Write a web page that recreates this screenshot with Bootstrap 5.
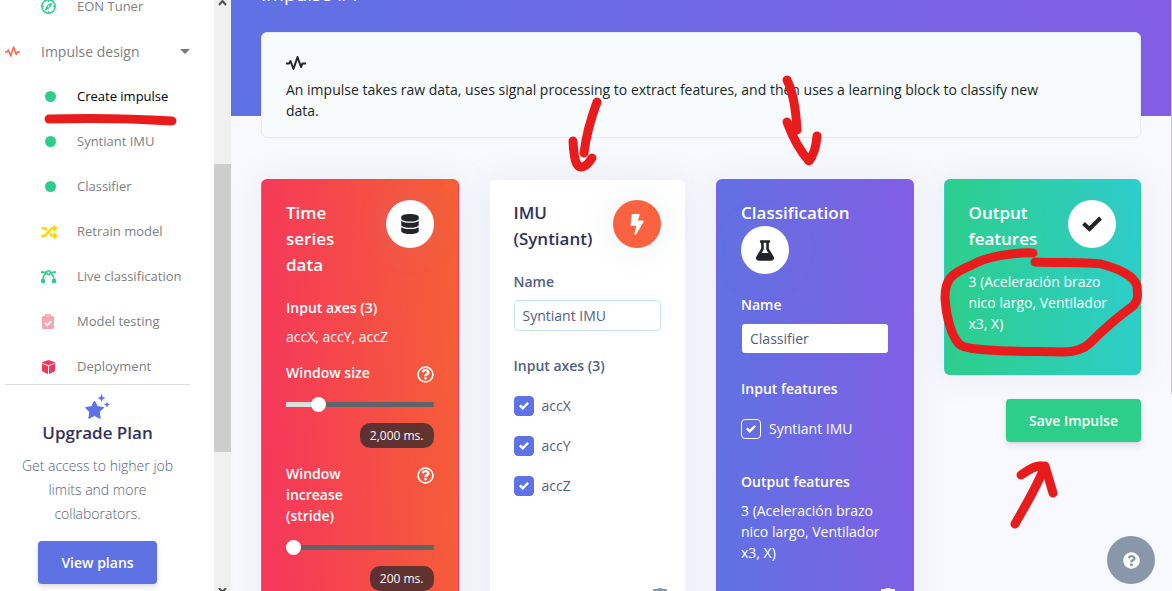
<!DOCTYPE html>
<html lang="en">
<head>
<meta charset="utf-8">
<meta name="viewport" content="width=device-width, initial-scale=1">
<title>Create impulse</title>
<link rel="stylesheet" href="https://cdn.jsdelivr.net/npm/bootstrap@5.3.0/dist/css/bootstrap.min.css">
<style>
  body { font-family: "Open Sans", sans-serif; font-size: 14px; line-height: 21px; color: #525f7f; background: #f8f9fe; }
  h1, h2, h3, p { margin: 0; }
  svg { display: block; flex: none; }

  /* Sidebar */
  .side { width: 214px; flex: none; }
  .side-scrolled { margin-top: -16px; }
  .side-link { height: 45px; display: flex; align-items: center; color: #808080; text-decoration: none; font-size: 13px; }
  .side-link.sub { padding-left: 41px; }
  .side-link.sub .ico { width: 36px; flex: none; }
  .side-link.group { font-size: 14px; padding: 0 24px 0 5px; }
  .side-link.group .ico { width: 36px; flex: none; color: #fb6340; }
  .side-link.current { color: #000; }
  .dot { width: 11px; height: 11px; margin-left: 4px; border-radius: 50%; background: #2dce89; }
  .caret { border: 5px solid transparent; border-top-color: #777; border-bottom: 0; }
  .plan { margin: -5px 24px 0 5px; border-top: 1px solid #dfdfdf; padding-top: 9px; }
  .plan h2 { font-size: 17px; line-height: 26px; font-weight: 600; color: #32325d; }
  .plan p { font-weight: 300; line-height: 24px; padding: 0 12px; margin: 8px 0 15px; }
  .act { font-size: 14px; font-weight: 600; line-height: 21px; padding: 10px 22px; border-radius: 4px; color: #fff; box-shadow: 0 4px 6px rgba(50,50,93,.11), 0 1px 3px rgba(0,0,0,.08); }
  .act-plan { background: #5e72e4; }
  .act-save { background: #2dce89; }
  .bar { width: 17px; flex: none; background: #f0f0f0; }
  .bar-thumb { height: 288px; margin-top: 156px; background: #cdcdcd; }
  .edge { width: 1px; flex: none; }
  .edge div { height: 394px; background: #cbc9d2; }

  /* Main area */
  .hero { display: flow-root; height: 116px; background: linear-gradient(87deg, #5e72e4, #825ee4); padding: 0 30px; }
  .hero h1 { font-size: 19px; line-height: 26px; margin-top: -19px; color: #fff; font-weight: 400; }
  .body-area { margin-top: -84px; padding: 0 30px; }
  .info { background: #f7fbfc; border: 1px solid #e5ecf0; border-radius: 6px; color: #212529; padding: 22px 84px 16px 24px; margin-bottom: 41px; }
  .blocks { --bs-gutter-x: 30px; }
  .block { border: 1px solid transparent; border-radius: 6px; padding: 20px 24px 24px; background: #fff; background-clip: padding-box; box-shadow: 0 0 32px rgba(136,152,170,.15); }
  .block.tinted { color: #fff; background-clip: border-box; }
  .block.red { background-image: linear-gradient(87deg, #f5365c, #f56036); padding-bottom: 37px; }
  .block.indigo { background-image: linear-gradient(87deg, #5e72e4, #825ee4); }
  .block.green { background-image: linear-gradient(87deg, #2dce89, #2dcecc); padding-bottom: 40px; }
  .head { display: flex; flex-wrap: wrap; column-gap: 16px; margin-bottom: 19px; }
  .indigo .head { margin-bottom: 20px; }
  .head h2 { flex: 1 1 0; font-size: 17px; line-height: 26px; font-weight: 600; color: #32325d; }
  .tinted .head h2 { color: #fff; }
  .disc { width: 48px; height: 48px; border-radius: 50%; background: #fff; color: #212529; display: flex; align-items: center; justify-content: center; box-shadow: 0 0 32px rgba(136,152,170,.15); }
  .disc.orange { background: #fb6340; color: #fff; }
  .lbl { font-size: 14px; font-weight: 600; line-height: 21px; margin: 0; display: block; }
  .field { width: 100%; height: 31px; border: 1px solid #c4e3f1; border-radius: 4px; padding: 0 8px; font-size: 14px; color: #525f7f; background: #fff; }
  .tinted .field { border-color: transparent; background-clip: padding-box; }
  .opt { display: flex; gap: 8px; height: 24px; padding-top: 4px; line-height: 20px; }
  .tick { appearance: none; width: 20px; height: 20px; margin: 0; flex: none; border-radius: 4px; border: 1px solid #5e72e4; background: #5e72e4 url("data:image/svg+xml,%3Csvg xmlns='http://www.w3.org/2000/svg' viewBox='0 0 8 8'%3E%3Cpath fill='%23fff' d='M6.6.7 3 4.3 1.4 2.8 0 4.2l3 3 5-5z'/%3E%3C/svg%3E") center/10px no-repeat; }
  .tinted .tick { border-color: #fff; background-color: transparent; }
  .ctl { display: flex; justify-content: space-between; align-items: flex-start; margin-top: 15px; }
  .slide { --fill: 0%; appearance: none; display: block; width: 100%; height: 15px; margin: 14px 0 0; background: linear-gradient(to right, #dedede var(--fill), #5f6468 var(--fill)) center/100% 5px no-repeat; border-radius: 3px; }
  .slide::-webkit-slider-thumb { appearance: none; width: 15px; height: 15px; border-radius: 50%; background: #fff; }
  .slide::-moz-range-thumb { width: 15px; height: 15px; border: 0; border-radius: 50%; background: #fff; }
  .amount { display: block; width: max-content; margin: 11px 0 0 auto; padding: 2px 10px; border-radius: 10px; background: rgba(33,37,41,.7); font-size: 12px; line-height: 21px; }
  .bin { display: block; margin: auto -6px 0 auto; padding: 0; border: 0; background: none; color: #8898aa; }
  .tinted .bin { color: #fff; }
  .help { position: fixed; right: 17px; bottom: 7px; width: 48px; height: 48px; border: 0; border-radius: 50%; background: #8898aa; color: #fff; }
  .marks { position: absolute; left: 0; top: 0; pointer-events: none; }
</style>
</head>
<body>
<svg width="0" height="0" class="position-absolute" aria-hidden="true">
  <symbol id="pulse" viewBox="0 0 20 16"><path d="M0 8.500h3L4.500 6 7.500 14 11.500 2l3.500 10 1.500-3.500H20" fill="none" stroke="currentColor" stroke-width="2" stroke-linejoin="round"/></symbol>
  <symbol id="ask" viewBox="0 0 512 512"><circle cx="256" cy="256" r="224" fill="none" stroke="currentColor" stroke-width="50"/><path fill="currentColor" d="M262.655 90c-54.497 0-89.255 22.957-116.549 63.758-3.536 5.286-2.353 12.415 2.715 16.258l34.699 26.310c5.205 3.947 12.621 3.008 16.665-2.122 17.864-22.658 30.113-35.797 57.303-35.797 20.429 0 45.698 13.148 45.698 32.958 0 14.976-12.363 22.667-32.534 33.976C247.128 238.528 216 254.941 216 296v4c0 6.627 5.373 12 12 12h56c6.627 0 12-5.373 12-12v-1.333c0-28.462 83.186-29.647 83.186-106.667 0-58.002-60.165-102-116.531-102zM256 330c-23 0-42 19-42 42s19 42 42 42 42-19 42-42-19-42-42-42z"/></symbol>
  <symbol id="trash" viewBox="0 0 14 16"><path fill="currentColor" d="M1 1h3.500L5.500 0h3l1 1H13a1 1 0 0 1 1 1v1H0V2a1 1 0 0 1 1-1zM1 4h12l-.7 10.600A1.500 1.500 0 0 1 10.800 16H3.200a1.500 1.500 0 0 1-1.500-1.400z"/></symbol>
</svg>

<div class="d-flex vh-100 overflow-hidden position-relative">
  <nav class="side bg-white" aria-label="Project">
    <div class="side-scrolled">
      <a class="side-link sub" href="#"><span class="ico"><svg width="15" height="15" viewBox="0 0 15 15"><circle cx="7.500" cy="7.500" r="6.700" fill="none" stroke="#2dce89" stroke-width="1.500"/><path d="M11.800 3 8.900 8.900 3.200 12 6.100 6.100z" fill="#2dce89"/><circle cx="7.500" cy="7.500" r="1" fill="#fff"/><path d="M7.500 1v2M7.500 12v2M1 7.500h2M12 7.500h2" stroke="#2dce89"/></svg></span>EON Tuner</a>
      <a class="side-link group" href="#"><span class="ico"><svg width="15" height="13"><use href="#pulse"/></svg></span><span class="flex-grow-1">Impulse design</span><span class="caret"></span></a>
      <a class="side-link sub current" href="#"><span class="ico"><span class="dot d-block"></span></span>Create impulse</a>
      <a class="side-link sub" href="#"><span class="ico"><span class="dot d-block"></span></span>Syntiant IMU</a>
      <a class="side-link sub" href="#"><span class="ico"><span class="dot d-block"></span></span>Classifier</a>
      <a class="side-link sub" href="#"><span class="ico"><svg width="17" height="16" viewBox="0 0 512 512"><path fill="#ffd600" d="M504.971 359.029c9.373 9.373 9.373 24.569 0 33.941l-80 79.984c-15.010 15.010-40.971 4.490-40.971-16.971V416h-58.785a12.004 12.004 0 0 1-8.773-3.812l-70.556-75.596 53.333-57.143L352 336h32v-39.981c0-21.438 25.943-31.998 40.971-16.971l80 79.981zM12 176h84l52.781 56.551 53.333-57.143-70.556-75.596A11.999 11.999 0 0 0 122.785 96H12c-6.627 0-12 5.373-12 12v56c0 6.627 5.373 12 12 12zm372 0v39.984c0 21.460 25.961 31.980 40.971 16.971l80-79.984c9.373-9.373 9.373-24.569 0-33.941l-80-79.981C409.943 24.021 384 34.582 384 56.019V96h-58.785a12.004 12.004 0 0 0-8.773 3.812L96 336H12c-6.627 0-12 5.373-12 12v56c0 6.627 5.373 12 12 12h110.785c3.326 0 6.503-1.381 8.773-3.812L352 176h32z"/></svg></span>Retrain model</a>
      <a class="side-link sub" href="#"><span class="ico"><svg width="15" height="13" viewBox="0 0 15 13"><g fill="none" stroke="#2dce89" stroke-width="1.500"><path d="M1.500 2.300h12M5.500 3C3.500 4.200 2.300 6 2 9M9.500 3c2 1.200 3.200 3 3.500 6"/><circle cx="7.500" cy="2.600" r="1.800" fill="#fff"/></g><g fill="#2dce89"><circle cx="1.200" cy="2.300" r="1.200"/><circle cx="13.800" cy="2.300" r="1.200"/><rect y="9" width="4" height="4" rx=".8"/><rect x="11" y="9" width="4" height="4" rx=".8"/></g></svg></span>Live classification</a>
      <a class="side-link sub" href="#"><span class="ico"><svg width="14" height="15" viewBox="0 0 14 15"><path fill="#f3a4b5" d="M2.500 2H4a3 3 0 0 1 6 0h1.500A1.500 1.500 0 0 1 13 3.500v10a1.500 1.500 0 0 1-1.500 1.500h-9A1.500 1.500 0 0 1 1 13.500v-10A1.500 1.500 0 0 1 2.500 2z"/><circle cx="7" cy="2.200" r=".8" fill="#fff"/><path d="m4 9 2.200 2.200L10.500 7" fill="none" stroke="#fff" stroke-width="1.700"/></svg></span>Model testing</a>
      <a class="side-link sub" href="#"><span class="ico"><svg width="15" height="14" viewBox="0 0 15 14"><g fill="#f5365c"><path d="M7.500 0 14 2.300v.5L7.500 5.300 1 2.800v-.5z"/><path d="M1 3.800 7 6v8l-5-2.300a1.500 1.500 0 0 1-1-1.400zM14 3.800 8 6v8l5-2.300a1.500 1.500 0 0 0 1-1.400z"/></g></svg></span>Deployment</a>
    </div>
    <section class="plan text-center">
      <svg class="mx-auto" width="26" height="26" viewBox="0 0 26 26" fill="#5e72e4"><path d="m9.500 7 2.900 5.600 6.300 1-4.500 4.500 1 6.300-5.700-2.900-5.700 2.900 1-6.300L.5 13.600l6.200-1z" stroke="#5e72e4" stroke-linejoin="round"/><path d="m16.500 0 1.200 2.900 2.800 1.100-2.800 1.200-1.200 2.800-1.200-2.800L12.500 4l2.800-1.100zM22 7.500l.9 2.200 2.200.9-2.200.9-.9 2.200-.9-2.200-2.200-.9 2.200-.9z"/></svg>
      <h2>Upgrade Plan</h2>
      <p>Get access to higher job limits and more collaborators.</p>
      <button type="button" class="btn act act-plan">View plans</button>
    </section>
  </nav>
  <div class="bar d-flex flex-column align-items-center" aria-hidden="true">
    <svg width="9" height="8" viewBox="0 0 9 8"><path d="m1 5 3.500-4L8 5" fill="none" stroke="#505050" stroke-width="2"/></svg>
    <div class="bar-thumb w-100"></div>
    <svg class="mt-auto" width="9" height="3" viewBox="0 0 9 3"><path d="m1 0 3.500 4L8 0" fill="none" stroke="#505050" stroke-width="2"/></svg>
  </div>

  <main class="flex-grow-1">
    <header class="hero"><h1>Impulse #1</h1></header>
    <div class="body-area">
      <section class="info">
        <svg width="20" height="16"><use href="#pulse"/></svg>
        <p class="mt-2">An impulse takes raw data, uses signal processing to extract features, and then uses a learning block to classify new data.</p>
      </section>

      <div class="row blocks">
        <div class="col-3 d-flex">
          <section class="block tinted red w-100">
            <div class="head">
              <h2>Time series data</h2>
              <span class="disc"><svg width="18" height="20" viewBox="0 0 448 512"><path fill="currentColor" d="M448 73.143v45.714C448 159.143 347.667 192 224 192S0 159.143 0 118.857V73.143C0 32.857 100.333 0 224 0s224 32.857 224 73.143zM448 176v102.857C448 319.143 347.667 352 224 352S0 319.143 0 278.857V176c48.125 33.143 136.208 48.572 224 48.572S399.874 209.143 448 176zm0 160v102.857C448 479.143 347.667 512 224 512S0 479.143 0 438.857V336c48.125 33.143 136.208 48.572 224 48.572S399.874 369.143 448 336z"/></svg></span>
            </div>
            <h3 class="lbl">Input axes (3)</h3>
            <p class="mt-2">accX, accY, accZ</p>
            <div class="ctl">
              <label class="lbl col-8" for="win-size">Window size</label>
              <svg class="mt-1" width="17" height="17"><use href="#ask"/></svg>
            </div>
            <input class="slide" id="win-size" type="range" min="0" max="100" value="19" style="--fill:22%">
            <output class="amount" for="win-size">2,000 ms.</output>
            <div class="ctl">
              <label class="lbl col-8" for="win-step">Window increase (stride)</label>
              <svg class="mt-1" width="17" height="17"><use href="#ask"/></svg>
            </div>
            <input class="slide" id="win-step" type="range" min="0" max="100" value="0">
            <output class="amount" for="win-step">200 ms.</output>
          </section>
        </div>

        <div class="col-3 d-flex">
          <section class="block w-100 d-flex flex-column">
            <div class="head">
              <h2>IMU (Syntiant)</h2>
              <span class="disc orange"><svg width="14" height="21" viewBox="0 0 320 512"><path fill="currentColor" d="M296 160H180.600l42.600-129.800C227.200 15 215.700 0 200 0H56C44 0 33.800 8.900 32.200 20.800l-32 240C-1.700 275.200 9.500 288 24 288h118.700L96.600 482.500c-3.600 15.200 8 29.500 23.300 29.500 8.400 0 16.400-4.400 20.800-12l176-304c9.300-15.900-2.200-36-20.700-36z"/></svg></span>
            </div>
            <label class="lbl mb-2" for="imu-name">Name</label>
            <input class="field" id="imu-name" type="text" value="Syntiant IMU">
            <fieldset class="mt-4">
              <legend class="lbl mb-3">Input axes (3)</legend>
              <div class="opt mb-3"><input class="tick" type="checkbox" id="ax" checked><label for="ax">accX</label></div>
              <div class="opt mb-3"><input class="tick" type="checkbox" id="ay" checked><label for="ay">accY</label></div>
              <div class="opt"><input class="tick" type="checkbox" id="az" checked><label for="az">accZ</label></div>
            </fieldset>
            <button type="button" class="bin" aria-label="Delete block"><svg width="14" height="16"><use href="#trash"/></svg></button>
          </section>
        </div>

        <div class="col-3 d-flex">
          <section class="block tinted indigo w-100 d-flex flex-column">
            <div class="head">
              <h2>Classification</h2>
              <span class="disc"><svg width="18" height="21" viewBox="0 0 448 512"><path fill="currentColor" d="M437.200 403.500L320 215V64h8c13.300 0 24-10.700 24-24V24c0-13.300-10.700-24-24-24H120c-13.300 0-24 10.700-24 24v16c0 13.300 10.700 24 24 24h8v151L10.800 403.500C-18.500 450.600 15.300 512 70.900 512h306.200c55.700 0 89.400-61.500 60.100-108.500zM137.900 320l48.200-77.600c3.700-5.200 5.800-11.600 5.800-18.400V64h64v160c0 6.900 2.200 13.200 5.800 18.400l48.200 77.600h-172z"/></svg></span>
            </div>
            <label class="lbl mb-2" for="cls-name">Name</label>
            <input class="field" id="cls-name" type="text" value="Classifier">
            <fieldset class="mt-4 mb-4">
              <legend class="lbl mb-3">Input features</legend>
              <div class="opt"><input class="tick" type="checkbox" id="feat" checked><label for="feat">Syntiant IMU</label></div>
            </fieldset>
            <h3 class="lbl mt-2">Output features</h3>
            <p class="mt-2">3 (Aceleración brazo nico largo, Ventilador x3, X)</p>
            <button type="button" class="bin" aria-label="Delete block"><svg width="14" height="16"><use href="#trash"/></svg></button>
          </section>
        </div>

        <div class="col-3">
          <section class="block tinted green">
            <div class="head">
              <h2>Output features</h2>
              <span class="disc"><svg width="20" height="16" viewBox="0 0 20 16"><path d="M1.500 7.500 7.500 13 18.500 2" fill="none" stroke="currentColor" stroke-width="4"/></svg></span>
            </div>
            <p>3 (Aceleración brazo nico largo, Ventilador x3, X)</p>
          </section>
          <div class="text-end mt-4"><button type="button" class="btn act act-save">Save Impulse</button></div>
        </div>
      </div>
    </div>
  </main>
  <div class="edge" aria-hidden="true"><div></div></div>

  <!-- Hand-drawn red pen marks over the page -->
  <svg class="marks" width="1172" height="591" viewBox="0 0 1172 591" fill="none" stroke="#e81c1c" stroke-width="9" stroke-linecap="round" stroke-linejoin="round" aria-hidden="true">
    <path d="M49 119c40-1 75-1 123 2"/>
    <path d="M597 102c-7 19-11 34-13 51M573 141c1 18 3 26 8 26s8-4 11-9"/>
    <path d="M787 80c7 14 9 30 10 50M787 122c7 19 13 29 22 39 5-6 7-13 8-25"/>
    <path d="M1033 253c-20-1-48 4-61 12-23 9-27 16-27 33 1 18 6 37 14 46 8 8 60 7 103 8 14 0 22-3 28-9 15-15 26-25 43-37 5-5 5-9 4-20-2-10-20-18-36-22-14-2-40-1-66-2"/>
    <path d="M1015 524c10-18 20-33 30-58l8 27M1021 475c9-6 18-12 24-8"/>
  </svg>
  <button type="button" class="help d-flex align-items-center justify-content-center" aria-label="Help"><svg width="17" height="17" viewBox="0 0 512 512"><path fill="currentColor" d="M504 256c0 136.997-111.043 248-248 248S8 392.997 8 256C8 119.083 119.043 8 256 8s248 111.083 248 248zM262.655 90c-54.497 0-89.255 22.957-116.549 63.758-3.536 5.286-2.353 12.415 2.715 16.258l34.699 26.310c5.205 3.947 12.621 3.008 16.665-2.122 17.864-22.658 30.113-35.797 57.303-35.797 20.429 0 45.698 13.148 45.698 32.958 0 14.976-12.363 22.667-32.534 33.976C247.128 238.528 216 254.941 216 296v4c0 6.627 5.373 12 12 12h56c6.627 0 12-5.373 12-12v-1.333c0-28.462 83.186-29.647 83.186-106.667 0-58.002-60.165-102-116.531-102zM256 338c-25.365 0-46 20.635-46 46 0 25.364 20.635 46 46 46s46-20.636 46-46c0-25.365-20.635-46-46-46z"/></svg></button>
</div>
<script src="https://cdn.jsdelivr.net/npm/bootstrap@5.3.0/dist/js/bootstrap.bundle.min.js"></script>
</body>
</html>
